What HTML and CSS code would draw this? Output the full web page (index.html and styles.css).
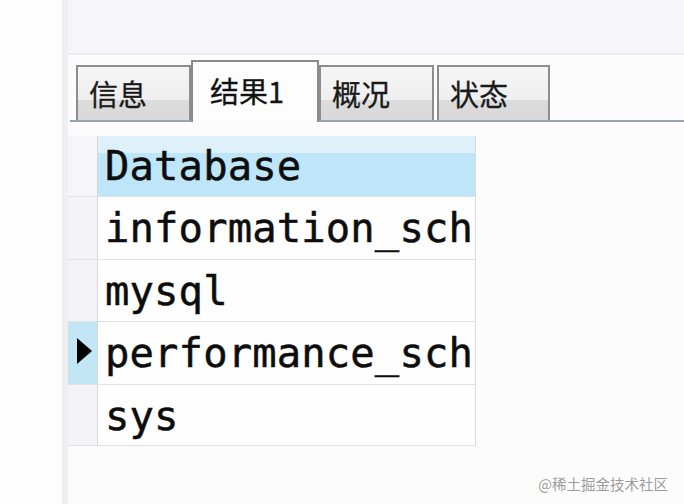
FILE: index.html
```html
<!DOCTYPE html>
<html>
<head>
<meta charset="utf-8">
<link rel="stylesheet" href="styles.css">
</head>
<body>
<div class="gutter"></div>
<div class="strip"></div>
<div class="main">
  <div class="topbar"></div>
  <div class="tabs">
    <div class="tab t1">信息</div>
    <div class="tab active t2">结果1</div>
    <div class="tab t3">概况</div>
    <div class="tab t4">状态</div>
  </div>
  <div class="grid">
    <div class="rh head"></div><div class="cell headcell">Database</div>
    <div class="rh"></div><div class="cell">information_sch</div>
    <div class="rh"></div><div class="cell">mysql</div>
    <div class="rh cur"><span class="tri"></span></div><div class="cell">performance_sch</div>
    <div class="rh"></div><div class="cell">sys</div>
  </div>
</div>
<div class="watermark">@稀土掘金技术社区</div>
</body>
</html>
```
FILE: styles.css
```css
html, body {
  margin: 0;
  padding: 0;
}
body {
  width: 684px;
  height: 504px;
  overflow: hidden;
  display: flex;
  background: #fcfcfd;
  font-family: "Noto Sans CJK SC", "Noto Sans", sans-serif;
  position: relative;
}
.gutter {
  width: 62px;
  background: #fdfdfe;
}
.strip {
  width: 6px;
  background: #efeff1;
}
.main {
  flex: 1;
  display: flex;
  flex-direction: column;
}
.topbar {
  height: 53px;
  background: #f6f6f8;
  border-bottom: 2px solid #ececee;
}
.tabs {
  height: 65px;
  display: flex;
  align-items: flex-end;
  padding-left: 8px;
  border-bottom: 2px solid #98a2b0;
  margin-left: 2px;
}
.tab {
  box-sizing: border-box;
  height: 55px;
  border: 2px solid #8d8d8d;
  border-bottom: none;
  background: linear-gradient(#f5f5f5 0, #efefef 62%, #dcdcdc 62%, #d9d9d9 100%);
  font-size: 29px;
  line-height: 1;
  color: #1a1a1a;
  padding: 12px 0 0 11px;
  -webkit-text-stroke: 0.3px #1a1a1a;
}
.t1 { width: 115px; margin-left: -2px; }
.t2 { width: 128px; }
.t3 { width: 115px; }
.t4 { width: 113px; margin-left: 3px; }
.tab.active {
  height: 62px;
  margin-bottom: -2px;
  background: #fdfdfe;
  border-color: #8a8a8a;
  padding: 14px 0 0 17px;
  color: #111;
}
.grid {
  margin-top: 14px;
  display: grid;
  grid-template-columns: 30px 378px;
  grid-template-rows: 61px 63px 62px 63px 61px;
  font-family: "DejaVu Sans Mono", "Liberation Mono", monospace;
  font-size: 40.5px;
  letter-spacing: 0.15px;
  color: #0d0d0d;
  -webkit-text-stroke: 0.5px #0d0d0d;
}
.rh {
  background: #f4f4f6;
  border-bottom: 1px solid #e2e2e4;
  border-right: 1px solid #d6d6d8;
  position: relative;
}
.rh.head {
  background: #f6f6f8;
}
.rh.cur {
  background: #c2e6f6;
}
.tri {
  position: absolute;
  left: 9px;
  top: 16px;
  width: 0;
  height: 0;
  border-top: 13px solid transparent;
  border-bottom: 13px solid transparent;
  border-left: 15px solid #000;
}
.cell {
  overflow: hidden;
  white-space: nowrap;
  border-bottom: 1px solid #e2e2e4;
  border-right: 1px solid #dcdcde;
  background: #fefefe;
  padding-left: 7px;
  line-height: 62px;
}
.headcell {
  background: linear-gradient(#def1fa 0, #def1fa 17px, #bee6f8 17px, #bee6f8 100%);
  line-height: 60px;
}
.watermark {
  position: absolute;
  right: 16px;
  bottom: 10px;
  font-size: 14.5px;
  color: #9c9c9c;
  font-family: "Noto Sans CJK SC", sans-serif;
}
```
